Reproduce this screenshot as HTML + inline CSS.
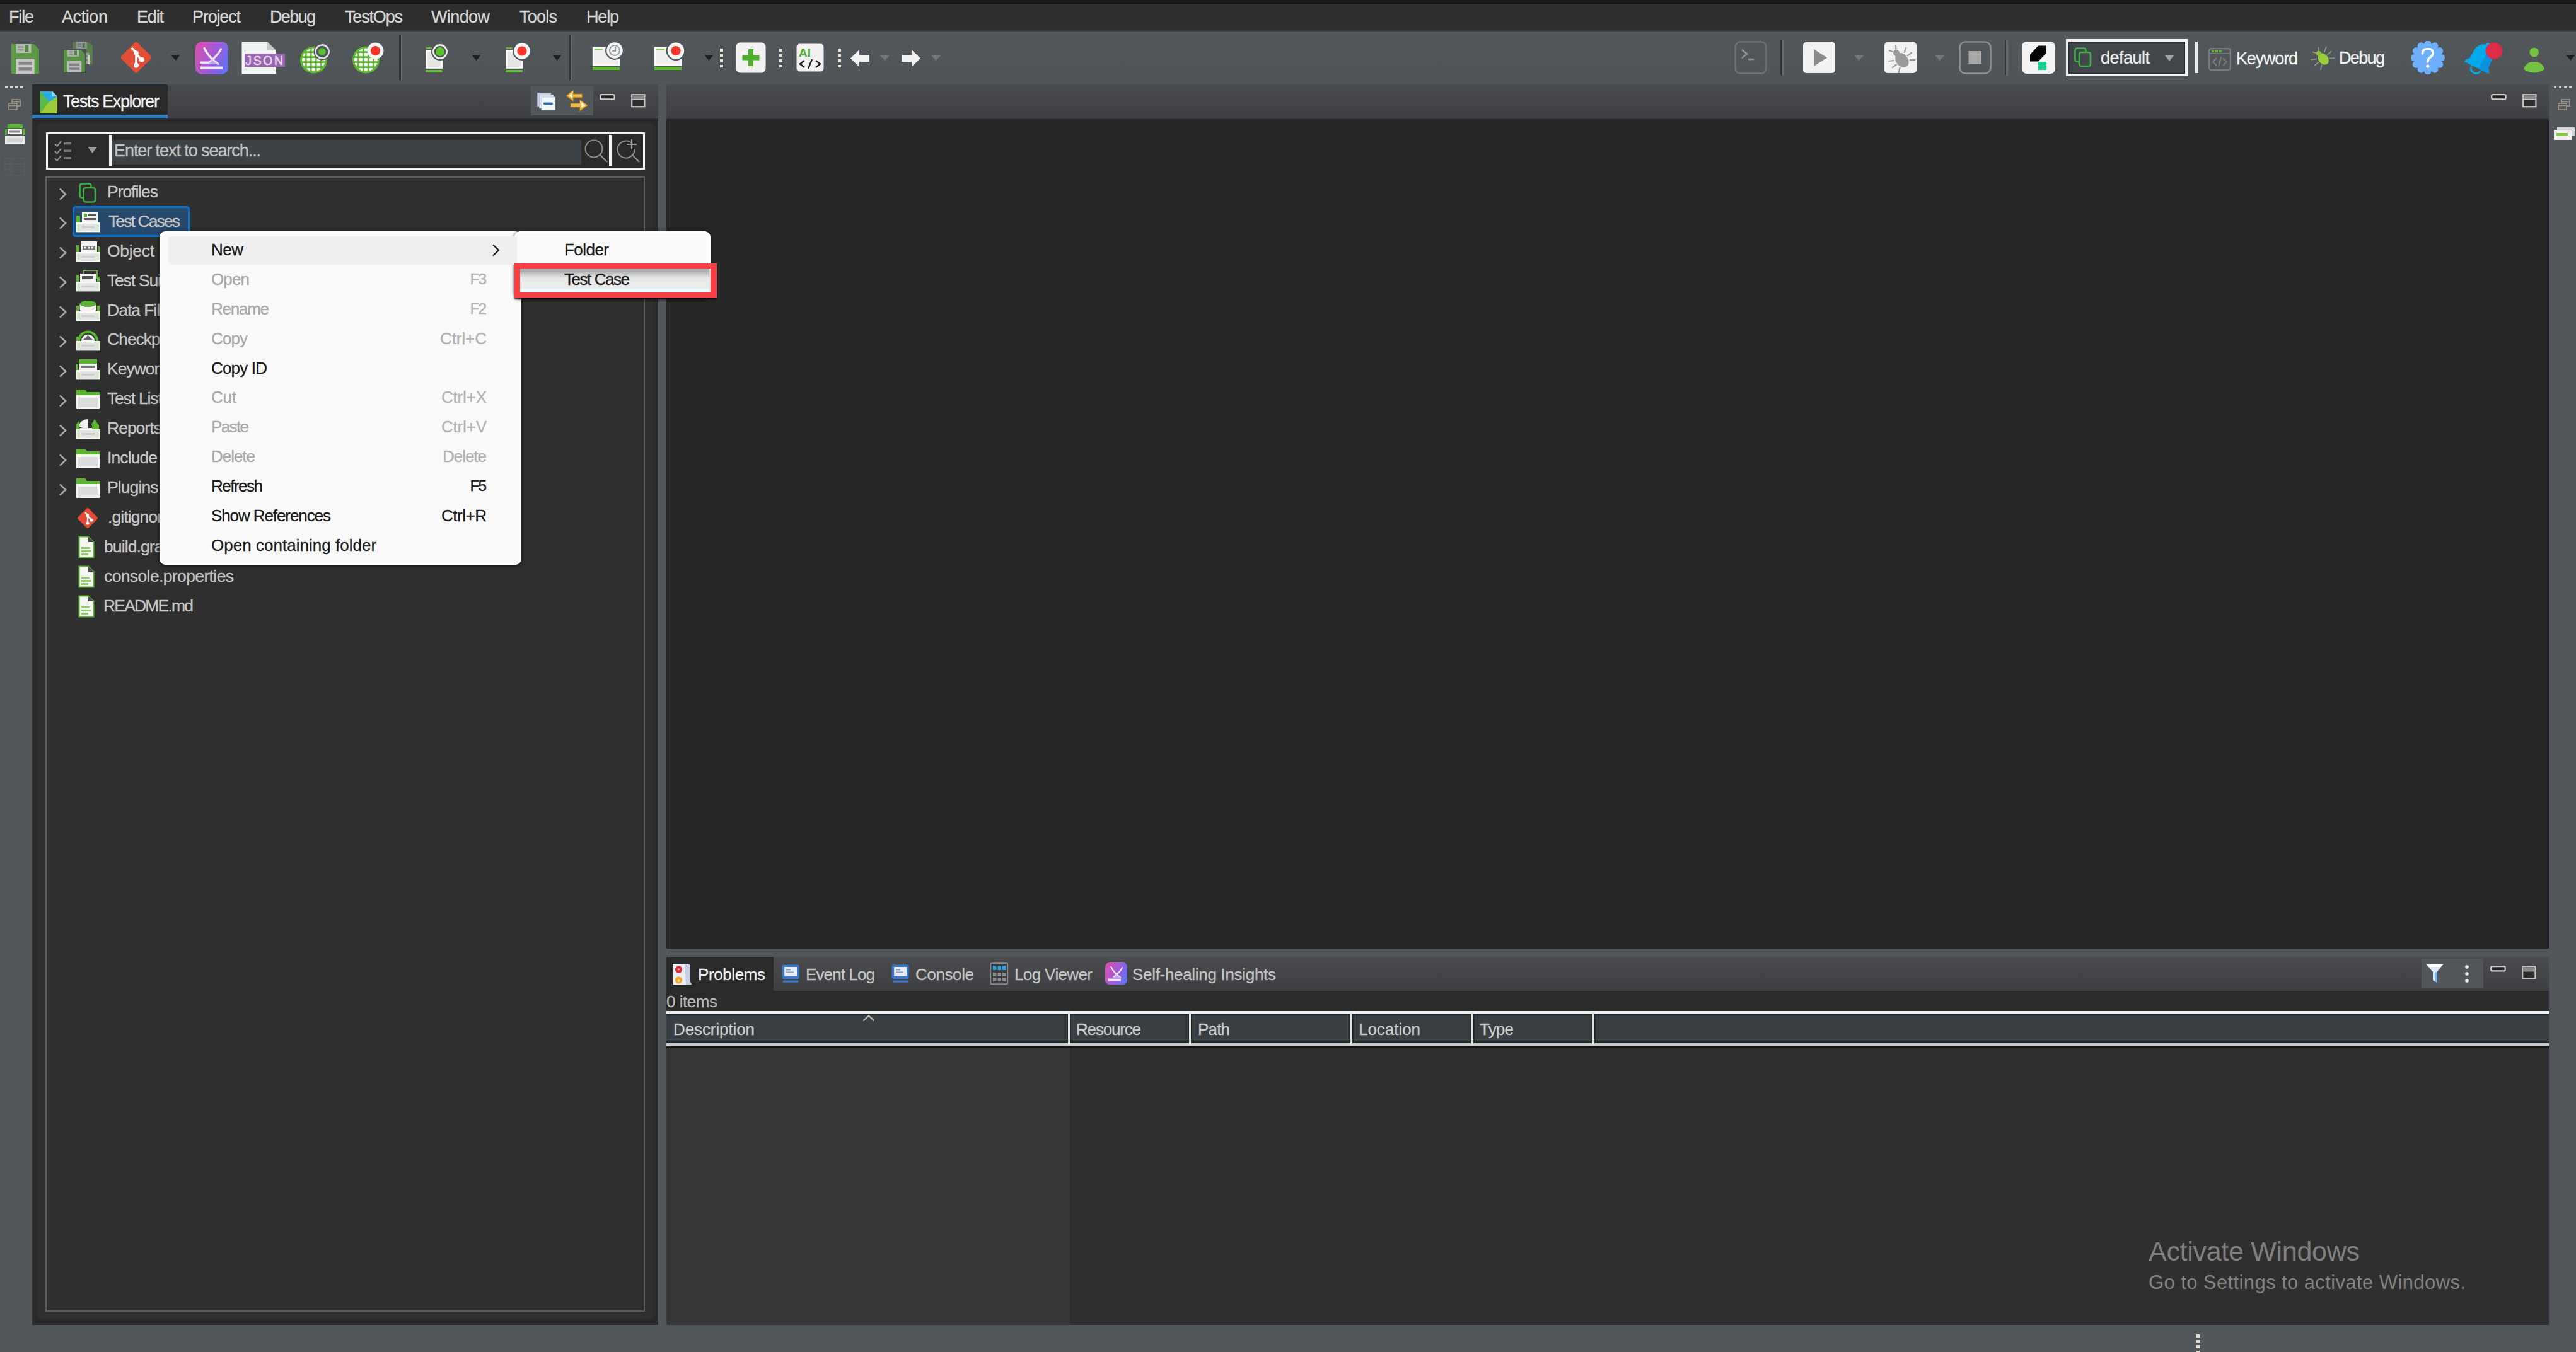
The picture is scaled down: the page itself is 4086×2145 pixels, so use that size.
<!DOCTYPE html>
<html><head><meta charset="utf-8"><title>Katalon Studio</title>
<style>
html,body{margin:0;padding:0;}
body{width:4086px;height:2145px;overflow:hidden;background:#50565a;position:relative;
font-family:"Liberation Sans",sans-serif;}
#root{position:absolute;left:0;top:0;width:4086px;height:2145px;overflow:hidden;}
#root div,#root span,#root svg{position:absolute;box-sizing:border-box;}
.t{white-space:nowrap;font-family:"Liberation Sans",sans-serif;-webkit-text-stroke:0.3px currentColor;}
</style></head><body><div id="root">
<div style="left:0px;top:0px;width:4086px;height:8px;background:#1b1b1b"></div>
<div style="left:0px;top:7px;width:4086px;height:42px;background:#2e2e2e"></div>
<div style="left:0px;top:46.5px;width:4086px;height:3.5px;background:linear-gradient(#2e2e2e,#43484b)"></div>
<span class="t" style="left:14px;top:9.5px;height:35px;line-height:35px;font-size:27px;letter-spacing:-1.17px;color:#d6d6d6;">File</span>
<span class="t" style="left:98px;top:9.5px;height:35px;line-height:35px;font-size:27px;letter-spacing:-0.41px;color:#d6d6d6;">Action</span>
<span class="t" style="left:217px;top:9.5px;height:35px;line-height:35px;font-size:27px;letter-spacing:-1.17px;color:#d6d6d6;">Edit</span>
<span class="t" style="left:305px;top:9.5px;height:35px;line-height:35px;font-size:27px;letter-spacing:-1.17px;color:#d6d6d6;">Project</span>
<span class="t" style="left:428px;top:9.5px;height:35px;line-height:35px;font-size:27px;letter-spacing:-1.64px;color:#d6d6d6;">Debug</span>
<span class="t" style="left:547px;top:9.5px;height:35px;line-height:35px;font-size:27px;letter-spacing:-1.17px;color:#d6d6d6;">TestOps</span>
<span class="t" style="left:684px;top:9.5px;height:35px;line-height:35px;font-size:27px;letter-spacing:-0.61px;color:#d6d6d6;">Window</span>
<span class="t" style="left:824px;top:9.5px;height:35px;line-height:35px;font-size:27px;letter-spacing:-0.76px;color:#d6d6d6;">Tools</span>
<span class="t" style="left:930px;top:9.5px;height:35px;line-height:35px;font-size:27px;letter-spacing:-1.18px;color:#d6d6d6;">Help</span>
<div style="left:0px;top:50px;width:4086px;height:84px;background:linear-gradient(#52585c,#50565a 30%,#4f5558)"></div>
<svg style="left:18px;top:69.5px;opacity:1.0" width="44" height="47" viewBox="0 0 42 45"><path d="M0 0 H34 L42 8 V45 H0 Z" fill="#5b9945"/><rect x="7" y="0" width="23" height="13.5" fill="#b4bdb1"/><rect x="9.5" y="3" width="9" height="2.6" fill="#8e968c"/><rect x="9.5" y="7.4" width="9" height="2.6" fill="#8e968c"/><rect x="21" y="2" width="5" height="9.5" fill="#4f8a3b"/><rect x="7" y="22" width="28" height="23" fill="#c6c6c6"/><rect x="11" y="27" width="20" height="4.4" fill="#868686"/><rect x="11" y="35.4" width="20" height="4.4" fill="#868686"/></svg>
<svg style="left:115px;top:67px;opacity:0.62" width="32" height="34" viewBox="0 0 42 45"><path d="M0 0 H34 L42 8 V45 H0 Z" fill="#5b9945"/><rect x="7" y="0" width="23" height="13.5" fill="#b4bdb1"/><rect x="9.5" y="3" width="9" height="2.6" fill="#8e968c"/><rect x="9.5" y="7.4" width="9" height="2.6" fill="#8e968c"/><rect x="21" y="2" width="5" height="9.5" fill="#4f8a3b"/><rect x="7" y="22" width="28" height="23" fill="#c6c6c6"/><rect x="11" y="27" width="20" height="4.4" fill="#868686"/><rect x="11" y="35.4" width="20" height="4.4" fill="#868686"/></svg>
<div style="left:100px;top:77px;width:36px;height:39px;background:#4a4f52"></div>
<svg style="left:101px;top:78.5px;opacity:0.92" width="34" height="36" viewBox="0 0 42 45"><path d="M0 0 H34 L42 8 V45 H0 Z" fill="#5b9945"/><rect x="7" y="0" width="23" height="13.5" fill="#b4bdb1"/><rect x="9.5" y="3" width="9" height="2.6" fill="#8e968c"/><rect x="9.5" y="7.4" width="9" height="2.6" fill="#8e968c"/><rect x="21" y="2" width="5" height="9.5" fill="#4f8a3b"/><rect x="7" y="22" width="28" height="23" fill="#c6c6c6"/><rect x="11" y="27" width="20" height="4.4" fill="#868686"/><rect x="11" y="35.4" width="20" height="4.4" fill="#868686"/></svg>
<div style="left:139px;top:88px;width:2.6px;height:14px;background:#c9d3c5"></div>
<svg style="left:189.5px;top:65px;" width="52" height="52" viewBox="0 0 50 50"><rect x="7.6" y="7.6" width="34.8" height="34.8" rx="3" transform="rotate(45 25 25)" fill="#e24d35"/><path d="M18 10.5 L25 17.5 V37 M25 20 L33.5 28.5" stroke="#fff" stroke-width="3.4" fill="none"/><circle cx="25" cy="37" r="3.8" fill="#fff"/><circle cx="33.5" cy="28.5" r="3.8" fill="#fff"/><circle cx="25" cy="18.5" r="3.6" fill="#fff"/></svg>
<svg style="left:271px;top:87px;" width="15" height="9" viewBox="0 0 15 9"><path d="M0 0 H15 L7.5 9 Z" fill="#1f1f1f"/></svg>
<svg style="left:310px;top:66px;" width="52" height="52" viewBox="0 0 52 52"><defs><linearGradient id="sh310" x1="0" y1="0.3" x2="1" y2="0.7"><stop offset="0" stop-color="#d650b4"/><stop offset="0.5" stop-color="#a35bd6"/><stop offset="1" stop-color="#6370f4"/></linearGradient></defs><rect x="0" y="0" width="52" height="52" rx="10.5" fill="url(#sh310)"/><path d="M14 10.5 Q20 24 36 35.5" stroke="#f7eefb" stroke-width="3.2" stroke-linecap="round" fill="none"/><path d="M40.5 12 Q34 24 20 34" stroke="#f1e2f8" stroke-width="3.2" stroke-linecap="round" fill="none"/><path d="M26 28 L37 36 L20 36 Z" fill="#cdb8f3" opacity="0.75"/><rect x="7" y="31.5" width="13" height="3.4" fill="#f4e8fb"/><rect x="7" y="39.5" width="36" height="4.2" fill="#f0e2fa"/></svg>
<svg style="left:383px;top:66px;" width="70" height="52" viewBox="0 0 70 52"><path d="M0.5 0.5 H41 L55 14 V51.5 H0.5 Z" fill="#f1f3f2"/><path d="M41 0.5 V14 H55 Z" fill="#c4cac6"/><rect x="5" y="19.5" width="64" height="20.5" fill="#9b67b5"/><text x="37.5" y="37" font-family="Liberation Sans" font-size="19.5" text-anchor="middle" fill="#eadcf2" stroke="#eadcf2" stroke-width="0.5" letter-spacing="2.6">JSON</text></svg>
<svg style="left:476px;top:66px;" width="52" height="52" viewBox="0 0 52 52"><defs><clipPath id="gc476"><circle cx="21.5" cy="29" r="18.5"/></clipPath></defs><circle cx="21.5" cy="29" r="21.5" fill="#5cb82e"/><g clip-path="url(#gc476)"><rect x="2.5" y="10" width="5.6" height="5.2" rx="1" fill="#f6ecf6"/><rect x="10.5" y="10" width="5.6" height="5.2" rx="1" fill="#f6ecf6"/><rect x="18.5" y="10" width="5.6" height="5.2" rx="1" fill="#f6ecf6"/><rect x="26.5" y="10" width="5.6" height="5.2" rx="1" fill="#f6ecf6"/><rect x="34.5" y="10" width="5.6" height="5.2" rx="1" fill="#f6ecf6"/><rect x="2.5" y="18" width="5.6" height="5.2" rx="1" fill="#f6ecf6"/><rect x="10.5" y="18" width="5.6" height="5.2" rx="1" fill="#f6ecf6"/><rect x="18.5" y="18" width="5.6" height="5.2" rx="1" fill="#f6ecf6"/><rect x="26.5" y="18" width="5.6" height="5.2" rx="1" fill="#f6ecf6"/><rect x="34.5" y="18" width="5.6" height="5.2" rx="1" fill="#f6ecf6"/><rect x="2.5" y="26" width="5.6" height="5.2" rx="1" fill="#f6ecf6"/><rect x="10.5" y="26" width="5.6" height="5.2" rx="1" fill="#f6ecf6"/><rect x="18.5" y="26" width="5.6" height="5.2" rx="1" fill="#f6ecf6"/><rect x="26.5" y="26" width="5.6" height="5.2" rx="1" fill="#f6ecf6"/><rect x="34.5" y="26" width="5.6" height="5.2" rx="1" fill="#f6ecf6"/><rect x="2.5" y="34" width="5.6" height="5.2" rx="1" fill="#f6ecf6"/><rect x="10.5" y="34" width="5.6" height="5.2" rx="1" fill="#f6ecf6"/><rect x="18.5" y="34" width="5.6" height="5.2" rx="1" fill="#f6ecf6"/><rect x="26.5" y="34" width="5.6" height="5.2" rx="1" fill="#f6ecf6"/><rect x="34.5" y="34" width="5.6" height="5.2" rx="1" fill="#f6ecf6"/><rect x="2.5" y="42" width="5.6" height="5.2" rx="1" fill="#f6ecf6"/><rect x="10.5" y="42" width="5.6" height="5.2" rx="1" fill="#f6ecf6"/><rect x="18.5" y="42" width="5.6" height="5.2" rx="1" fill="#f6ecf6"/><rect x="26.5" y="42" width="5.6" height="5.2" rx="1" fill="#f6ecf6"/><rect x="34.5" y="42" width="5.6" height="5.2" rx="1" fill="#f6ecf6"/></g><circle cx="35" cy="16" r="13.5" fill="#50565a"/><circle cx="35" cy="16" r="10.6" fill="none" stroke="#dedede" stroke-width="2.6"/><circle cx="35" cy="16" r="5.8" fill="#5cc22e"/></svg>
<svg style="left:558.5px;top:66px;" width="52" height="52" viewBox="0 0 52 52"><defs><clipPath id="gc558"><circle cx="21.5" cy="29" r="18.5"/></clipPath></defs><circle cx="21.5" cy="29" r="21.5" fill="#5cb82e"/><g clip-path="url(#gc558)"><rect x="2.5" y="10" width="5.6" height="5.2" rx="1" fill="#f6ecf6"/><rect x="10.5" y="10" width="5.6" height="5.2" rx="1" fill="#f6ecf6"/><rect x="18.5" y="10" width="5.6" height="5.2" rx="1" fill="#f6ecf6"/><rect x="26.5" y="10" width="5.6" height="5.2" rx="1" fill="#f6ecf6"/><rect x="34.5" y="10" width="5.6" height="5.2" rx="1" fill="#f6ecf6"/><rect x="2.5" y="18" width="5.6" height="5.2" rx="1" fill="#f6ecf6"/><rect x="10.5" y="18" width="5.6" height="5.2" rx="1" fill="#f6ecf6"/><rect x="18.5" y="18" width="5.6" height="5.2" rx="1" fill="#f6ecf6"/><rect x="26.5" y="18" width="5.6" height="5.2" rx="1" fill="#f6ecf6"/><rect x="34.5" y="18" width="5.6" height="5.2" rx="1" fill="#f6ecf6"/><rect x="2.5" y="26" width="5.6" height="5.2" rx="1" fill="#f6ecf6"/><rect x="10.5" y="26" width="5.6" height="5.2" rx="1" fill="#f6ecf6"/><rect x="18.5" y="26" width="5.6" height="5.2" rx="1" fill="#f6ecf6"/><rect x="26.5" y="26" width="5.6" height="5.2" rx="1" fill="#f6ecf6"/><rect x="34.5" y="26" width="5.6" height="5.2" rx="1" fill="#f6ecf6"/><rect x="2.5" y="34" width="5.6" height="5.2" rx="1" fill="#f6ecf6"/><rect x="10.5" y="34" width="5.6" height="5.2" rx="1" fill="#f6ecf6"/><rect x="18.5" y="34" width="5.6" height="5.2" rx="1" fill="#f6ecf6"/><rect x="26.5" y="34" width="5.6" height="5.2" rx="1" fill="#f6ecf6"/><rect x="34.5" y="34" width="5.6" height="5.2" rx="1" fill="#f6ecf6"/><rect x="2.5" y="42" width="5.6" height="5.2" rx="1" fill="#f6ecf6"/><rect x="10.5" y="42" width="5.6" height="5.2" rx="1" fill="#f6ecf6"/><rect x="18.5" y="42" width="5.6" height="5.2" rx="1" fill="#f6ecf6"/><rect x="26.5" y="42" width="5.6" height="5.2" rx="1" fill="#f6ecf6"/><rect x="34.5" y="42" width="5.6" height="5.2" rx="1" fill="#f6ecf6"/></g><circle cx="36.5" cy="14.6" r="13" fill="#f6f6f6"/><circle cx="36.5" cy="14.6" r="7.6" fill="#f5342a"/></svg>
<div style="left:633px;top:56px;width:2.5px;height:71px;background:#30343a"></div>
<div style="left:635.8px;top:56px;width:2.5px;height:71px;background:#676c6f"></div>
<svg style="left:674px;top:66px;" width="44" height="52" viewBox="0 0 44 52"><rect x="1.6" y="9" width="10" height="2.2" fill="#5cb82e"/><rect x="1.4" y="13.4" width="26.6" height="29.4" fill="#fbfbfb"/><rect x="4.2" y="16" width="21" height="24" fill="#e6e6e6"/><rect x="1.2" y="45" width="26.4" height="3.8" fill="#5cc22e"/><circle cx="24" cy="16" r="14" fill="#50565a"/><circle cx="24" cy="16" r="10.6" fill="none" stroke="#efefef" stroke-width="2.6"/><circle cx="24" cy="16" r="6.9" fill="#5cc22e"/></svg>
<svg style="left:748px;top:87px;" width="15" height="9" viewBox="0 0 15 9"><path d="M0 0 H15 L7.5 9 Z" fill="#1f1f1f"/></svg>
<svg style="left:800.5px;top:66px;" width="44" height="52" viewBox="0 0 44 52"><rect x="1.6" y="9" width="10" height="2.2" fill="#5cb82e"/><rect x="1.4" y="13.4" width="26.6" height="29.4" fill="#fbfbfb"/><rect x="4.2" y="16" width="21" height="24" fill="#e6e6e6"/><rect x="1.2" y="45" width="26.4" height="3.8" fill="#5cc22e"/><circle cx="27" cy="15" r="15" fill="#50565a"/><circle cx="27" cy="15" r="12.8" fill="#f6f6f6"/><circle cx="27" cy="15" r="7.6" fill="#f5342a"/></svg>
<svg style="left:876px;top:87px;" width="15" height="9" viewBox="0 0 15 9"><path d="M0 0 H15 L7.5 9 Z" fill="#1f1f1f"/></svg>
<div style="left:903px;top:56px;width:2.5px;height:71px;background:#30343a"></div>
<div style="left:905.8px;top:56px;width:2.5px;height:71px;background:#676c6f"></div>
<svg style="left:939px;top:64px;" width="54" height="50" viewBox="0 0 54 50"><rect x="0.8" y="10.4" width="43.2" height="30" fill="#fbfbfb"/><rect x="3" y="16" width="39" height="21.5" fill="#efefef"/><rect x="3.5" y="13.2" width="13.5" height="2.2" fill="#7fd04e"/><rect x="0.8" y="42" width="43.2" height="5" fill="#5cb82e"/><circle cx="36" cy="16" r="15" fill="#50565a"/><circle cx="36" cy="16" r="12.8" fill="#f4f4f4"/><circle cx="36" cy="16" r="8" fill="none" stroke="#9a9a9a" stroke-width="2"/><path d="M37 10 V17 H32" stroke="#9a9a9a" stroke-width="2.2" fill="none"/></svg>
<svg style="left:1037px;top:64px;" width="54" height="50" viewBox="0 0 54 50"><rect x="0.8" y="10.4" width="43.2" height="30" fill="#fbfbfb"/><rect x="3" y="16" width="39" height="21.5" fill="#efefef"/><rect x="3.5" y="13.2" width="13.5" height="2.2" fill="#7fd04e"/><rect x="0.8" y="42" width="43.2" height="5" fill="#5cb82e"/><circle cx="35" cy="16.6" r="15.4" fill="#50565a"/><circle cx="35" cy="16.6" r="13.2" fill="#f6f6f6"/><circle cx="35" cy="16.6" r="7.6" fill="#f5342a"/></svg>
<svg style="left:1117px;top:87px;" width="15" height="9" viewBox="0 0 15 9"><path d="M0 0 H15 L7.5 9 Z" fill="#1f1f1f"/></svg>
<div style="left:1142px;top:77.0px;width:5px;height:4.6px;background:#e4ddd0"></div>
<div style="left:1142px;top:85.5px;width:5px;height:4.6px;background:#e4ddd0"></div>
<div style="left:1142px;top:94.0px;width:5px;height:4.6px;background:#e4ddd0"></div>
<div style="left:1142px;top:102.5px;width:5px;height:4.6px;background:#e4ddd0"></div>
<svg style="left:1167px;top:67px;" width="48" height="49" viewBox="0 0 48 49"><rect x="1" y="1" width="46" height="47" rx="6" fill="#f1f1f1" stroke="#fff" stroke-width="1"/><path d="M24 11 V38 M10.5 24.5 H37.5" stroke="#4caf2d" stroke-width="8"/></svg>
<div style="left:1236px;top:77.0px;width:5px;height:4.6px;background:#e4ddd0"></div>
<div style="left:1236px;top:85.5px;width:5px;height:4.6px;background:#e4ddd0"></div>
<div style="left:1236px;top:94.0px;width:5px;height:4.6px;background:#e4ddd0"></div>
<div style="left:1236px;top:102.5px;width:5px;height:4.6px;background:#e4ddd0"></div>
<svg style="left:1263px;top:69px;" width="44" height="45" viewBox="0 0 44 45"><rect x="0.5" y="0.5" width="43" height="44" rx="5" fill="#f1f1f1"/><text x="4" y="21" font-family="Liberation Sans" font-weight="bold" font-size="19" fill="#4caf2d">AI</text><path d="M13 27 L6 32.5 L13 38 M31 27 L38 32.5 L31 38 M25 25 L19 40" stroke="#222" stroke-width="2.4" fill="none"/></svg>
<div style="left:1329px;top:77.0px;width:5px;height:4.6px;background:#e4ddd0"></div>
<div style="left:1329px;top:85.5px;width:5px;height:4.6px;background:#e4ddd0"></div>
<div style="left:1329px;top:94.0px;width:5px;height:4.6px;background:#e4ddd0"></div>
<div style="left:1329px;top:102.5px;width:5px;height:4.6px;background:#e4ddd0"></div>
<svg style="left:1349px;top:79px;" width="30" height="27" viewBox="0 0 30 27"><path d="M0 13.5 L14 0 V8 H30 V19 H14 V27 Z" fill="#f2f2f2"/></svg>
<svg style="left:1396px;top:88px;" width="15" height="8" viewBox="0 0 15 8"><path d="M0 0 H15 L7.5 8 Z" fill="#73787b"/></svg>
<svg style="left:1430px;top:79px;" width="30" height="27" viewBox="0 0 30 27"><path d="M30 13.5 L16 0 V8 H0 V19 H16 V27 Z" fill="#f2f2f2"/></svg>
<svg style="left:1477px;top:88px;" width="15" height="8" viewBox="0 0 15 8"><path d="M0 0 H15 L7.5 8 Z" fill="#73787b"/></svg>
<svg style="left:2751px;top:65px;" width="52" height="53" viewBox="0 0 52 53"><rect x="1.5" y="1.5" width="49" height="50" rx="8" fill="none" stroke="#6d7275" stroke-width="2.4"/><path d="M12 14 L20 20.5 L12 27" stroke="#8f9497" stroke-width="2.6" fill="none"/><path d="M22 29 H31" stroke="#8f9497" stroke-width="2.6"/></svg>
<div style="left:2823.5px;top:64px;width:2.5px;height:55px;background:#30343a"></div>
<div style="left:2826.3px;top:64px;width:2.5px;height:55px;background:#676c6f"></div>
<svg style="left:2860px;top:67px;" width="51" height="49" viewBox="0 0 51 49"><rect x="0" y="0" width="51" height="49" rx="5" fill="#f2f2f2"/><path d="M17 11 L38 24.5 L17 38 Z" fill="#8a8a8a"/></svg>
<svg style="left:2941px;top:88px;" width="15" height="8" viewBox="0 0 15 8"><path d="M0 0 H15 L7.5 8 Z" fill="#73787b"/></svg>
<svg style="left:2989px;top:67px;" width="51" height="49" viewBox="0 0 51 49"><rect x="0" y="0" width="51" height="49" rx="5" fill="#f2f2f2"/><g transform="rotate(-38 26 26)"><ellipse cx="26" cy="29" rx="9.5" ry="12.5" fill="#9a9a9a"/><circle cx="26" cy="14.5" r="5" fill="#9a9a9a"/><g stroke="#9a9a9a" stroke-width="2.2" fill="none"><path d="M16 22 L8 17 M15.5 29 H6 M16.5 36 L9 42 M36 22 L44 17 M36.5 29 H46 M35.5 36 L43 42 M23 10 L19 4 M29 10 L33 4"/></g></g></svg>
<svg style="left:3069px;top:88px;" width="15" height="8" viewBox="0 0 15 8"><path d="M0 0 H15 L7.5 8 Z" fill="#73787b"/></svg>
<svg style="left:3107px;top:65px;" width="52" height="53" viewBox="0 0 52 53"><rect x="1.5" y="1.5" width="49" height="50" rx="9" fill="none" stroke="#8a8f92" stroke-width="2.6"/><rect x="15.5" y="16" width="20.5" height="20" fill="#a8a8a8"/></svg>
<div style="left:3179.5px;top:64px;width:2.5px;height:55px;background:#30343a"></div>
<div style="left:3182.3px;top:64px;width:2.5px;height:55px;background:#676c6f"></div>
<svg style="left:3207px;top:66px;" width="53" height="51" viewBox="0 0 53 51"><rect x="0" y="0" width="53" height="51" rx="8" fill="#f4f4f4"/><path d="M26 6.5 H38.5 V18.5 L26 31.5 H13 V20.5 Z" fill="#050505"/><rect x="25.6" y="32" width="13.6" height="13" fill="#1fd192"/></svg>
<div style="left:3277px;top:62px;width:193px;height:59px;border:4px solid #f2f2f2;background:#41464a;box-shadow:inset 0 0 0 1.5px #2a2e31"></div>
<svg style="left:3290px;top:75px;" width="28" height="32" viewBox="0 0 28 32"><rect x="1.5" y="1.5" width="17" height="21" rx="3.5" fill="none" stroke="#3fae49" stroke-width="2.6"/><rect x="8" y="8" width="18" height="22" rx="3.5" fill="#41464a" stroke="#3fae49" stroke-width="2.6"/></svg>
<span class="t" style="left:3332px;top:74.5px;height:35px;line-height:35px;font-size:27px;letter-spacing:-0.51px;color:#f0f0f0;">default</span>
<svg style="left:3434px;top:88px;" width="14" height="9" viewBox="0 0 14 9"><path d="M0 0 H14 L7.0 9 Z" fill="#9ea3a6"/></svg>
<div style="left:3481.5px;top:66px;width:5px;height:50px;background:#ececec"></div>
<svg style="left:3503px;top:76px;" width="36" height="36" viewBox="0 0 36 36"><rect x="1.2" y="1.2" width="33.6" height="33.6" rx="3" fill="none" stroke="#787d80" stroke-width="2.2"/><path d="M1 9 H35" stroke="#787d80" stroke-width="2"/><rect x="5" y="3.5" width="4" height="3.5" fill="#5cb531"/><rect x="11" y="3.5" width="4" height="3.5" fill="#5cb531"/><rect x="17" y="3.5" width="4" height="3.5" fill="#5cb531"/><path d="M13 16 L7 22 L13 28 M23 16 L29 22 L23 28 M20 14 L16 30" stroke="#787d80" stroke-width="2" fill="none"/></svg>
<span class="t" style="left:3547px;top:75.5px;height:35px;line-height:35px;font-size:27px;letter-spacing:-1.17px;color:#f2f2f2;">Keyword</span>
<svg style="left:3665px;top:73px;" width="38" height="38" viewBox="0 0 38 38"><g transform="rotate(-40 19 19)"><g stroke="#8c9686" stroke-width="1.8" fill="none"><path d="M11 14 L3 9 M10.5 20 H1.5 M11.5 26 L4 32 M27 14 L35 9 M27.5 20 H36.5 M26.5 26 L34 32 M16.5 7 L13 1.5 M21.5 7 L25 1.5"/></g><ellipse cx="19" cy="21" rx="7.6" ry="10" fill="#9bcf3a"/><circle cx="19" cy="9.5" r="4" fill="#8fbf3a"/></g></svg>
<span class="t" style="left:3710px;top:74.5px;height:35px;line-height:35px;font-size:27px;letter-spacing:-1.64px;color:#f2f2f2;">Debug</span>
<svg style="left:3824px;top:65px;" width="54" height="53" viewBox="0 0 54 53"><circle cx="27" cy="26.5" r="22.5" fill="#6eb0fb"/><circle cx="27.0" cy="5.0" r="5.6" fill="#6eb0fb"/><circle cx="37.8" cy="7.9" r="5.6" fill="#6eb0fb"/><circle cx="45.6" cy="15.7" r="5.6" fill="#6eb0fb"/><circle cx="48.5" cy="26.5" r="5.6" fill="#6eb0fb"/><circle cx="45.6" cy="37.2" r="5.6" fill="#6eb0fb"/><circle cx="37.8" cy="45.1" r="5.6" fill="#6eb0fb"/><circle cx="27.0" cy="48.0" r="5.6" fill="#6eb0fb"/><circle cx="16.3" cy="45.1" r="5.6" fill="#6eb0fb"/><circle cx="8.4" cy="37.3" r="5.6" fill="#6eb0fb"/><circle cx="5.5" cy="26.5" r="5.6" fill="#6eb0fb"/><circle cx="8.4" cy="15.7" r="5.6" fill="#6eb0fb"/><circle cx="16.2" cy="7.9" r="5.6" fill="#6eb0fb"/><path d="M18.5 20 Q18.5 12.5 27 12.5 Q35 12.5 35 19 Q35 23.5 30 26.5 Q26.8 28.6 26.8 33" fill="none" stroke="#fff" stroke-width="3.6" stroke-linecap="round"/><circle cx="26.8" cy="40" r="2.6" fill="#fff"/></svg>
<svg style="left:3908px;top:64px;" width="66" height="58" viewBox="0 0 66 58"><g transform="rotate(27 27 30)"><path d="M27 1 Q30.5 1 30.5 5.5 Q43 9 43 24 L44 37 Q49 42 49 45 H5 Q5 42 10 37 L11 24 Q11 9 23.5 5.5 Q23.5 1 27 1 Z" fill="#03a9eb"/><path d="M31 8 Q43 11 43 24 L44 37 Q49 42 49 45 H31 Z" fill="#0a93dc"/><path d="M19 47 Q19 54 27 54 Q34 54 35 47" fill="none" stroke="#03a9eb" stroke-width="2.8"/></g><circle cx="48" cy="16.6" r="13.2" fill="#dd2c47"/></svg>
<svg style="left:3994px;top:64px;" width="52" height="56" viewBox="0 0 52 56"><circle cx="25.6" cy="28" r="25" fill="none" stroke="#5b5659" stroke-width="1"/><circle cx="25.6" cy="19" r="7.3" fill="#74c442"/><path d="M9 46 Q12 34 25.6 34 Q39 34 42.2 46 Q34 51.4 25.6 51.4 Q17 51.4 9 46 Z" fill="#74c442"/></svg>
<svg style="left:4070px;top:87px;" width="15" height="9" viewBox="0 0 15 9"><path d="M0 0 H15 L7.5 9 Z" fill="#1f1f1f"/></svg>
<div style="left:0px;top:134px;width:51px;height:1968px;background:#50565a"></div>
<div style="left:8px;top:136px;width:4px;height:4px;background:#d9d2c4"></div>
<div style="left:16px;top:136px;width:4px;height:4px;background:#d9d2c4"></div>
<div style="left:24px;top:136px;width:4px;height:4px;background:#d9d2c4"></div>
<div style="left:32px;top:136px;width:4px;height:4px;background:#d9d2c4"></div>
<svg style="left:13px;top:157px;" width="20" height="19" viewBox="0 0 20 19"><rect x="6" y="1" width="13" height="10" fill="none" stroke="#9a8f84" stroke-width="1.8"/><path d="M6 4.5 H19" stroke="#9a8f84" stroke-width="1.6"/><rect x="1" y="7" width="13" height="10" fill="#50565a" stroke="#9a8f84" stroke-width="1.8"/><path d="M1 10.5 H14" stroke="#9a8f84" stroke-width="1.6"/></svg>
<svg style="left:7px;top:197px;" width="33" height="33" viewBox="0 0 33 33"><rect x="5" y="0" width="24" height="6" fill="#5cb531"/><rect x="1" y="7" width="3" height="10" fill="#5cb531"/><rect x="29" y="7" width="3" height="10" fill="#5cb531"/><rect x="5" y="8" width="23" height="8" fill="#f4f4f4"/><rect x="8" y="10.5" width="17" height="3" fill="#888"/><rect x="1" y="19" width="31" height="13" fill="#e9e9e9"/><rect x="4" y="22" width="25" height="7" fill="#d2d2d2"/></svg>
<svg style="left:7px;top:250px;" width="33" height="30" viewBox="0 0 33 30"><g fill="none" stroke="#585d60" stroke-width="1.5"><rect x="1" y="1" width="31" height="27"/><path d="M1 10 H32 M1 19 H32 M11 1 V28"/></g></svg>
<div style="left:51px;top:134px;width:993px;height:1968px;background:#2a2a2a"></div>
<div style="left:51px;top:134px;width:993px;height:54px;background:linear-gradient(#494b4e,#3d3f42)"></div>
<div style="left:51px;top:188px;width:993px;height:6px;background:linear-gradient(#303234,#242424 50%,#2a2a2a)"></div>
<div style="left:60px;top:196px;width:975px;height:1896px;background:#2f2f2f"></div>
<div style="left:51px;top:134px;width:215px;height:53px;background:#2a2a2a"></div>
<div style="left:51px;top:181.5px;width:215px;height:6.5px;background:#2f7bbd"></div>
<svg style="left:63.5px;top:144.5px;" width="27" height="35" viewBox="0 0 27 35"><path d="M0 0 H19 L27 8 V35 H0 Z" fill="#9ccc3c"/><path d="M0 0 H19 L27 8 L13.5 17 Z" fill="#29abe2"/><path d="M0 0 L13.5 17 L0 35 Z" fill="#59b947"/><path d="M19 0 L27 8 H19 Z" fill="#8fd3ee"/></svg>
<span class="t" style="left:100px;top:143.9px;height:35px;line-height:35px;font-size:27px;letter-spacing:-1.39px;color:#f0f0f0;">Tests Explorer</span>
<div style="left:842px;top:136px;width:98.5px;height:47px;background:#50565a"></div>
<svg style="left:852px;top:146px;" width="30" height="30" viewBox="0 0 30 30"><rect x="0.8" y="1.6" width="21" height="21" fill="#c5d3e4" stroke="#a9b9cd" stroke-width="1.2"/><rect x="3.6" y="4.6" width="22" height="21" fill="#dfe9f3" stroke="#b3c2d4" stroke-width="1.2"/><rect x="7" y="8" width="21.5" height="20.5" fill="#f4fafc" stroke="#c2d0de" stroke-width="1.2"/><rect x="10" y="16.6" width="15" height="3.6" rx="1.6" fill="#2d6eb3"/></svg>
<svg style="left:897px;top:142px;" width="37" height="36" viewBox="0 0 37 36"><defs><linearGradient id="la1" x1="0" y1="0" x2="0" y2="1"><stop offset="0" stop-color="#f7d77f"/><stop offset="1" stop-color="#e9a019"/></linearGradient></defs><path d="M12.5 0.8 L0.8 10 L12.5 19 V13 H26.5 V7 H12.5 Z" fill="url(#la1)" stroke="#a26f12" stroke-width="1.1"/><path d="M22.5 16 L35.2 25 L22.5 34.6 V28 H8 V22 H22.5 Z" fill="url(#la1)" stroke="#a26f12" stroke-width="1.1"/><path d="M5 10 L11 6 V13.5 Z" fill="#fff6d8"/><path d="M31 25 L25 21 V29 Z" fill="#fff6d8"/></svg>
<svg style="left:951px;top:149px;" width="25" height="11" viewBox="0 0 25 11"><rect x="1.2" y="1.2" width="22.4" height="7.2" rx="2" fill="#1f2123" stroke="#cdcdcd" stroke-width="2.2"/></svg>
<svg style="left:1001px;top:149px;" width="23" height="22" viewBox="0 0 23 22"><rect x="1.2" y="1.2" width="20.2" height="19" fill="#2c2e30" stroke="#c6c6c6" stroke-width="2.2"/><rect x="2.4" y="2.4" width="17.8" height="5" fill="#8a8a8a"/><path d="M1 8.4 H22" stroke="#c6c6c6" stroke-width="1.8"/></svg>
<div style="left:72.5px;top:209.5px;width:950.5px;height:59.5px;background:#2a2a2a;border:3.6px solid #f4f4f4"></div>
<div style="left:173px;top:214px;width:5px;height:50px;background:#f0f0f0"></div>
<div style="left:178px;top:221.5px;width:744px;height:39.5px;background:#3c4245"></div>
<div style="left:966px;top:214px;width:5px;height:50px;background:#f4f4f4"></div>
<svg style="left:86px;top:223px;" width="29" height="36" viewBox="0 0 29 36"><path d="M1 5.0 L4.5 9.0 L11 1.0" fill="none" stroke="#8c8c8c" stroke-width="2"/><rect x="15" y="3.0" width="12" height="3.4" fill="#777"/><path d="M1 16.5 L4.5 20.5 L11 12.5" fill="none" stroke="#8c8c8c" stroke-width="2"/><rect x="15" y="14.5" width="12" height="3.4" fill="#777"/><path d="M1 28.0 L4.5 32.0 L11 24.0" fill="none" stroke="#8c8c8c" stroke-width="2"/><rect x="15" y="26.0" width="12" height="3.4" fill="#777"/></svg>
<svg style="left:139px;top:233px;" width="15" height="10" viewBox="0 0 15 10"><path d="M0 0 H15 L7.5 10 Z" fill="#9a9a9a"/></svg>
<span class="t" style="left:181px;top:221.5px;height:35px;line-height:35px;font-size:27px;letter-spacing:-1.07px;color:#c2c2c2;">Enter text to search...</span>
<svg style="left:925px;top:219px;" width="40" height="40" viewBox="0 0 40 40"><circle cx="17" cy="17" r="13.5" fill="none" stroke="#8e8e8e" stroke-width="2"/><path d="M26.5 26.5 L38 38" stroke="#8e8e8e" stroke-width="2.4"/></svg>
<svg style="left:976px;top:219px;" width="40" height="40" viewBox="0 0 40 40"><path d="M27 9 A13.5 13.5 0 1 0 30.5 17" fill="none" stroke="#8e8e8e" stroke-width="2"/><path d="M26.5 26.5 L38 38" stroke="#8e8e8e" stroke-width="2.4"/><path d="M26 2 V18 M18 10 H34" stroke="#9a9a9a" stroke-width="2.2"/></svg>
<div style="left:72px;top:280px;width:951px;height:1801px;border:2px solid #5c5c5c;background:#2f2f2f"></div>
<svg style="left:92.5px;top:297.5px;" width="14" height="20" viewBox="0 0 14 20"><path d="M2 1.5 L11 10 L2 18.5" fill="none" stroke="#a8a8a8" stroke-width="2.6"/></svg>
<svg style="left:125px;top:290.0px;" width="28" height="32" viewBox="0 0 28 32"><rect x="1.5" y="1.5" width="18" height="22" rx="3.5" fill="none" stroke="#3fae49" stroke-width="2.6"/><rect x="7.5" y="8" width="18.5" height="22.5" rx="3.5" fill="#2f2f2f" stroke="#3fae49" stroke-width="2.6"/></svg>
<span class="t" style="left:170px;top:286.9px;height:34px;line-height:34px;font-size:26.5px;letter-spacing:-1.05px;color:#c6c6c6;">Profiles</span>
<div style="left:114.5px;top:327px;width:186.8px;height:48.8px;background:#26496c;border:3px solid #0c71ca;border-radius:4.5px"></div>
<svg style="left:92.5px;top:344.4px;" width="14" height="20" viewBox="0 0 14 20"><path d="M2 1.5 L11 10 L2 18.5" fill="none" stroke="#a8a8a8" stroke-width="2.6"/></svg>
<svg style="left:120px;top:334.9px;" width="39" height="34" viewBox="0 0 39 34"><rect x="10" y="1" width="25" height="17" fill="#f2f2f2"/><rect x="1" y="7" width="6" height="11" fill="#5cb531"/><rect x="13" y="4" width="5" height="5" fill="#5cb531"/><rect x="20" y="5" width="12" height="3" fill="#555"/><rect x="13" y="11" width="19" height="3" fill="#555"/><rect x="0.6" y="18" width="38" height="15.4" fill="#fafafa"/><rect x="2.2" y="20.4" width="34.8" height="11.2" fill="#d3eac3"/><rect x="6.6" y="20.4" width="26" height="11.2" fill="#e4e4e4"/><rect x="9" y="24" width="21" height="3" fill="#cfcfcf"/></svg>
<span class="t" style="left:172px;top:333.8px;height:34px;line-height:34px;font-size:26.5px;letter-spacing:-1.90px;color:#c6c6c6;">Test Cases</span>
<svg style="left:92.5px;top:391.3px;" width="14" height="20" viewBox="0 0 14 20"><path d="M2 1.5 L11 10 L2 18.5" fill="none" stroke="#a8a8a8" stroke-width="2.6"/></svg>
<svg style="left:120px;top:381.8px;" width="39" height="34" viewBox="0 0 39 34"><rect x="8" y="1" width="26" height="17" fill="#f2f2f2"/><rect x="1" y="7" width="4" height="11" fill="#5cb531"/><rect x="35" y="9" width="3" height="9" fill="#5cb531"/><rect x="11" y="8" width="20" height="6" fill="#777"/><rect x="13" y="9.5" width="3" height="3" fill="#eee"/><rect x="19" y="9.5" width="3" height="3" fill="#eee"/><rect x="25" y="9.5" width="3" height="3" fill="#eee"/><rect x="0.6" y="18" width="38" height="15.4" fill="#fafafa"/><rect x="2.2" y="20.4" width="34.8" height="11.2" fill="#d3eac3"/><rect x="6.6" y="20.4" width="26" height="11.2" fill="#e4e4e4"/><rect x="9" y="24" width="21" height="3" fill="#cfcfcf"/></svg>
<span class="t" style="left:170px;top:380.7px;height:34px;line-height:34px;font-size:26.5px;letter-spacing:-0.32px;color:#c6c6c6;">Object Repository</span>
<svg style="left:92.5px;top:438.2px;" width="14" height="20" viewBox="0 0 14 20"><path d="M2 1.5 L11 10 L2 18.5" fill="none" stroke="#a8a8a8" stroke-width="2.6"/></svg>
<svg style="left:120px;top:428.7px;" width="39" height="34" viewBox="0 0 39 34"><rect x="12" y="0" width="22" height="12" fill="none" stroke="#5cb531" stroke-width="2"/><rect x="7" y="5" width="25" height="13" fill="#f2f2f2"/><rect x="1" y="7" width="4" height="11" fill="#5cb531"/><rect x="34" y="10" width="4" height="8" fill="#5cb531"/><rect x="10" y="9" width="18" height="5" fill="#555"/><rect x="0.6" y="18" width="38" height="15.4" fill="#fafafa"/><rect x="2.2" y="20.4" width="34.8" height="11.2" fill="#d3eac3"/><rect x="6.6" y="20.4" width="26" height="11.2" fill="#e4e4e4"/><rect x="9" y="24" width="21" height="3" fill="#cfcfcf"/></svg>
<span class="t" style="left:170px;top:427.6px;height:34px;line-height:34px;font-size:26.5px;letter-spacing:-1.20px;color:#c6c6c6;">Test Suites</span>
<svg style="left:92.5px;top:485.1px;" width="14" height="20" viewBox="0 0 14 20"><path d="M2 1.5 L11 10 L2 18.5" fill="none" stroke="#a8a8a8" stroke-width="2.6"/></svg>
<svg style="left:120px;top:475.6px;" width="39" height="34" viewBox="0 0 39 34"><ellipse cx="19.5" cy="6" rx="13" ry="5" fill="#5cb531"/><path d="M6.5 6 V15 A13 5 0 0 0 32.5 15 V6 A13 5 0 0 1 6.5 6 Z" fill="#f2f2f2"/><rect x="1" y="9" width="4" height="9" fill="#5cb531"/><rect x="34" y="9" width="4" height="9" fill="#5cb531"/><rect x="0.6" y="18" width="38" height="15.4" fill="#fafafa"/><rect x="2.2" y="20.4" width="34.8" height="11.2" fill="#d3eac3"/><rect x="6.6" y="20.4" width="26" height="11.2" fill="#e4e4e4"/><rect x="9" y="24" width="21" height="3" fill="#cfcfcf"/></svg>
<span class="t" style="left:170px;top:474.5px;height:34px;line-height:34px;font-size:26.5px;letter-spacing:-1.00px;color:#c6c6c6;">Data Files</span>
<svg style="left:92.5px;top:532.0px;" width="14" height="20" viewBox="0 0 14 20"><path d="M2 1.5 L11 10 L2 18.5" fill="none" stroke="#a8a8a8" stroke-width="2.6"/></svg>
<svg style="left:120px;top:522.5px;" width="39" height="34" viewBox="0 0 39 34"><path d="M5 18 A14.5 14.5 0 0 1 34 18" fill="none" stroke="#5cb531" stroke-width="4"/><path d="M9 18 A10.5 10.5 0 0 1 30 18 Z" fill="#f2f2f2"/><path d="M12 16 L19.5 9 L27 16 Z" fill="#666"/><rect x="1" y="11" width="3" height="7" fill="#5cb531"/><rect x="0.6" y="18" width="38" height="15.4" fill="#fafafa"/><rect x="2.2" y="20.4" width="34.8" height="11.2" fill="#d3eac3"/><rect x="6.6" y="20.4" width="26" height="11.2" fill="#e4e4e4"/><rect x="9" y="24" width="21" height="3" fill="#cfcfcf"/></svg>
<span class="t" style="left:170px;top:521.4px;height:34px;line-height:34px;font-size:26.5px;letter-spacing:-1.00px;color:#c6c6c6;">Checkpoints</span>
<svg style="left:92.5px;top:578.9px;" width="14" height="20" viewBox="0 0 14 20"><path d="M2 1.5 L11 10 L2 18.5" fill="none" stroke="#a8a8a8" stroke-width="2.6"/></svg>
<svg style="left:120px;top:569.4px;" width="39" height="34" viewBox="0 0 39 34"><rect x="5" y="1" width="29" height="7" fill="#5cb531"/><rect x="5" y="8" width="29" height="10" fill="#f2f2f2"/><rect x="8" y="11" width="23" height="4" fill="#777"/><rect x="1" y="9" width="3" height="9" fill="#5cb531"/><rect x="0.6" y="18" width="38" height="15.4" fill="#fafafa"/><rect x="2.2" y="20.4" width="34.8" height="11.2" fill="#d3eac3"/><rect x="6.6" y="20.4" width="26" height="11.2" fill="#e4e4e4"/><rect x="9" y="24" width="21" height="3" fill="#cfcfcf"/></svg>
<span class="t" style="left:170px;top:568.3px;height:34px;line-height:34px;font-size:26.5px;letter-spacing:-1.00px;color:#c6c6c6;">Keywords</span>
<svg style="left:92.5px;top:625.8px;" width="14" height="20" viewBox="0 0 14 20"><path d="M2 1.5 L11 10 L2 18.5" fill="none" stroke="#a8a8a8" stroke-width="2.6"/></svg>
<svg style="left:120px;top:616.3px;" width="39" height="34" viewBox="0 0 39 34"><path d="M1 2 H15 L18 6 H38 V12 H1 Z" fill="#5cb531"/><rect x="1" y="11" width="37" height="22" fill="#f4f4f4"/><rect x="4" y="15" width="31" height="15" fill="#dcdcdc"/></svg>
<span class="t" style="left:170px;top:615.2px;height:34px;line-height:34px;font-size:26.5px;letter-spacing:-1.20px;color:#c6c6c6;">Test Listeners</span>
<svg style="left:92.5px;top:672.7px;" width="14" height="20" viewBox="0 0 14 20"><path d="M2 1.5 L11 10 L2 18.5" fill="none" stroke="#a8a8a8" stroke-width="2.6"/></svg>
<svg style="left:120px;top:663.2px;" width="39" height="34" viewBox="0 0 39 34"><path d="M19.5 18 L19.5 2 A16 16 0 0 0 4 14 Z" fill="#f0f0f0"/><path d="M6 16 A14 14 0 0 0 33 16 Z" fill="#dddddd"/><path d="M24 12 L30 2 L37 12 Z" fill="#5cb531"/><path d="M1 10 L6 4 V18 H1 Z" fill="#5cb531"/><rect x="26" y="11" width="11" height="7" fill="#5cb531"/><rect x="0.6" y="18" width="38" height="15.4" fill="#fafafa"/><rect x="2.2" y="20.4" width="34.8" height="11.2" fill="#d3eac3"/><rect x="6.6" y="20.4" width="26" height="11.2" fill="#e4e4e4"/><rect x="9" y="24" width="21" height="3" fill="#cfcfcf"/></svg>
<span class="t" style="left:170px;top:662.1px;height:34px;line-height:34px;font-size:26.5px;letter-spacing:-1.00px;color:#c6c6c6;">Reports</span>
<svg style="left:92.5px;top:719.5999999999999px;" width="14" height="20" viewBox="0 0 14 20"><path d="M2 1.5 L11 10 L2 18.5" fill="none" stroke="#a8a8a8" stroke-width="2.6"/></svg>
<svg style="left:120px;top:710.0999999999999px;" width="39" height="34" viewBox="0 0 39 34"><path d="M1 2 H15 L18 6 H38 V12 H1 Z" fill="#5cb531"/><rect x="1" y="11" width="37" height="22" fill="#f4f4f4"/><rect x="4" y="15" width="31" height="15" fill="#dcdcdc"/></svg>
<span class="t" style="left:170px;top:709.0px;height:34px;line-height:34px;font-size:26.5px;letter-spacing:-0.90px;color:#c6c6c6;">Include</span>
<svg style="left:92.5px;top:766.5px;" width="14" height="20" viewBox="0 0 14 20"><path d="M2 1.5 L11 10 L2 18.5" fill="none" stroke="#a8a8a8" stroke-width="2.6"/></svg>
<svg style="left:120px;top:757.0px;" width="39" height="34" viewBox="0 0 39 34"><path d="M1 2 H15 L18 6 H38 V12 H1 Z" fill="#5cb531"/><rect x="1" y="11" width="37" height="22" fill="#f4f4f4"/><rect x="4" y="15" width="31" height="15" fill="#dcdcdc"/></svg>
<span class="t" style="left:170px;top:755.9px;height:34px;line-height:34px;font-size:26.5px;letter-spacing:-0.90px;color:#c6c6c6;">Plugins</span>
<svg style="left:122px;top:804.9px;" width="34" height="34" viewBox="0 0 34 34"><rect x="5" y="5" width="24" height="24" rx="2.5" transform="rotate(45 17 17)" fill="#e24a33"/><path d="M13 8 L17 12 V25 M17 14 L23 20" stroke="#fff" stroke-width="2.4" fill="none"/><circle cx="17" cy="25" r="2.6" fill="#fff"/><circle cx="23" cy="20" r="2.6" fill="#fff"/><circle cx="17" cy="13" r="2.4" fill="#fff"/></svg>
<span class="t" style="left:171px;top:802.8px;height:34px;line-height:34px;font-size:26.5px;letter-spacing:-0.90px;color:#c6c6c6;">.gitignore</span>
<svg style="left:124px;top:849.8px;" width="26" height="36" viewBox="0 0 26 36"><path d="M1.5 1.5 H16 L24.5 10 V34.5 H1.5 Z" fill="#f6f6f6" stroke="#5cb531" stroke-width="2"/><path d="M16 1.5 V10 H24.5 Z" fill="#4a4a4a"/><rect x="5" y="18" width="13" height="3" fill="#8fce6a"/><rect x="5" y="23" width="15" height="3" fill="#8fce6a"/><rect x="5" y="28" width="11" height="3" fill="#8fce6a"/></svg>
<span class="t" style="left:165px;top:849.7px;height:34px;line-height:34px;font-size:26.5px;letter-spacing:-0.90px;color:#c6c6c6;">build.gradle</span>
<svg style="left:124px;top:896.6999999999999px;" width="26" height="36" viewBox="0 0 26 36"><path d="M1.5 1.5 H16 L24.5 10 V34.5 H1.5 Z" fill="#f6f6f6" stroke="#5cb531" stroke-width="2"/><path d="M16 1.5 V10 H24.5 Z" fill="#4a4a4a"/><rect x="5" y="18" width="13" height="3" fill="#8fce6a"/><rect x="5" y="23" width="15" height="3" fill="#8fce6a"/><rect x="5" y="28" width="11" height="3" fill="#8fce6a"/></svg>
<span class="t" style="left:165px;top:896.6px;height:34px;line-height:34px;font-size:26.5px;letter-spacing:-0.62px;color:#c6c6c6;">console.properties</span>
<svg style="left:124px;top:943.6px;" width="26" height="36" viewBox="0 0 26 36"><path d="M1.5 1.5 H16 L24.5 10 V34.5 H1.5 Z" fill="#f6f6f6" stroke="#5cb531" stroke-width="2"/><path d="M16 1.5 V10 H24.5 Z" fill="#4a4a4a"/><rect x="5" y="18" width="13" height="3" fill="#8fce6a"/><rect x="5" y="23" width="15" height="3" fill="#8fce6a"/><rect x="5" y="28" width="11" height="3" fill="#8fce6a"/></svg>
<span class="t" style="left:164px;top:943.5px;height:34px;line-height:34px;font-size:26.5px;letter-spacing:-1.82px;color:#c6c6c6;">README.md</span>
<div style="left:1057px;top:134px;width:2986px;height:1371px;background:#272727"></div>
<div style="left:1057px;top:134px;width:2986px;height:54.5px;background:linear-gradient(#4a4b4f,#3e3f43)"></div>
<svg style="left:3951px;top:149px;" width="25" height="11" viewBox="0 0 25 11"><rect x="1.2" y="1.2" width="22.4" height="7.2" rx="2" fill="#1f2123" stroke="#cdcdcd" stroke-width="2.2"/></svg>
<svg style="left:4001px;top:149px;" width="23" height="22" viewBox="0 0 23 22"><rect x="1.2" y="1.2" width="20.2" height="19" fill="#2c2e30" stroke="#c6c6c6" stroke-width="2.2"/><rect x="2.4" y="2.4" width="17.8" height="5" fill="#8a8a8a"/><path d="M1 8.4 H22" stroke="#c6c6c6" stroke-width="1.8"/></svg>
<div style="left:1057px;top:1518px;width:2986px;height:584px;background:#2f2f2f"></div>
<div style="left:1057px;top:1518px;width:2986px;height:54px;background:linear-gradient(#494b4e,#3d3f42)"></div>
<div style="left:1057px;top:1518px;width:170px;height:54px;background:#2a2a2a"></div>
<div style="left:1057px;top:1572px;width:2986px;height:32px;background:#2a2a2a"></div>
<svg style="left:1066px;top:1528px;" width="32" height="36" viewBox="0 0 32 36"><path d="M1 1 H24 L29 3 V30 L31 34 H1 Z" fill="#e9edf4"/><path d="M20 2 L29 3 V30 L31 34 H22 Z" fill="#c4cfe2"/><circle cx="10.5" cy="10" r="5.6" fill="#e8262b"/><circle cx="10.5" cy="10" r="1.8" fill="#f7b0b0"/><circle cx="10.5" cy="27" r="5.6" fill="#f5a623"/><circle cx="10.5" cy="28" r="1.8" fill="#fde6b0"/></svg>
<span class="t" style="left:1107px;top:1529.0px;height:34px;line-height:34px;font-size:26px;letter-spacing:-0.40px;color:#f0f0f0;">Problems</span>
<svg style="left:1240px;top:1530px;" width="29" height="30" viewBox="0 0 29 30"><rect x="0.6" y="0.6" width="27" height="22.6" rx="3" fill="#3b78d0"/><rect x="4.2" y="4" width="19.8" height="14.6" fill="#e9edf7"/><path d="M7 8.4 H14 M7 12.6 H19" stroke="#8f9cc0" stroke-width="2.4"/><rect x="2" y="25.6" width="24.4" height="3" fill="#3b78d0"/></svg>
<span class="t" style="left:1278px;top:1529.0px;height:34px;line-height:34px;font-size:26px;letter-spacing:-0.89px;color:#c4c4c4;">Event Log</span>
<svg style="left:1414px;top:1530px;" width="29" height="30" viewBox="0 0 29 30"><rect x="0.6" y="0.6" width="27" height="22.6" rx="3" fill="#3b78d0"/><rect x="4.2" y="4" width="19.8" height="14.6" fill="#e9edf7"/><path d="M7 8.4 H14 M7 12.6 H19" stroke="#8f9cc0" stroke-width="2.4"/><rect x="2" y="25.6" width="24.4" height="3" fill="#3b78d0"/></svg>
<span class="t" style="left:1452px;top:1529.0px;height:34px;line-height:34px;font-size:26px;letter-spacing:-0.40px;color:#c4c4c4;">Console</span>
<svg style="left:1570px;top:1527px;" width="30" height="36" viewBox="0 0 30 36"><rect x="1.2" y="1.2" width="27" height="33" rx="2" fill="#3a3d40" stroke="#8a8a8a" stroke-width="2"/><rect x="5.0" y="5" width="5.5" height="7" fill="#2fa0e0"/><rect x="12.5" y="5" width="5.5" height="7" fill="#2fa0e0"/><rect x="20.0" y="5" width="5.5" height="7" fill="#2fa0e0"/><rect x="5.0" y="16" width="5.5" height="6" fill="#8a8a8a"/><rect x="12.5" y="16" width="5.5" height="6" fill="#8a8a8a"/><rect x="20.0" y="16" width="5.5" height="6" fill="#8a8a8a"/><rect x="5.0" y="24" width="5.5" height="6" fill="#8a8a8a"/><rect x="12.5" y="24" width="5.5" height="6" fill="#8a8a8a"/><rect x="20.0" y="24" width="5.5" height="6" fill="#8a8a8a"/></svg>
<span class="t" style="left:1609px;top:1529.0px;height:34px;line-height:34px;font-size:26px;letter-spacing:-0.62px;color:#c4c4c4;">Log Viewer</span>
<svg style="left:1753px;top:1527px;" width="35" height="35" viewBox="0 0 52 52"><defs><linearGradient id="sh1753" x1="0" y1="0.3" x2="1" y2="0.7"><stop offset="0" stop-color="#d650b4"/><stop offset="0.5" stop-color="#a35bd6"/><stop offset="1" stop-color="#6370f4"/></linearGradient></defs><rect x="0" y="0" width="52" height="52" rx="10.5" fill="url(#sh1753)"/><path d="M14 10.5 Q20 24 36 35.5" stroke="#f7eefb" stroke-width="3.2" stroke-linecap="round" fill="none"/><path d="M40.5 12 Q34 24 20 34" stroke="#f1e2f8" stroke-width="3.2" stroke-linecap="round" fill="none"/><path d="M26 28 L37 36 L20 36 Z" fill="#cdb8f3" opacity="0.75"/><rect x="7" y="38" width="30" height="6" fill="#f0e2fa"/></svg>
<span class="t" style="left:1796px;top:1529.0px;height:34px;line-height:34px;font-size:26px;letter-spacing:-0.31px;color:#c4c4c4;">Self-healing Insights</span>
<div style="left:3841px;top:1521px;width:98px;height:47px;background:#50565a"></div>
<svg style="left:3847px;top:1528px;" width="30" height="33" viewBox="0 0 30 33"><path d="M1 1 H29 L18.5 14 V31 L12 27 V14 Z" fill="#dcecff"/><path d="M1 1 H29 L25 6 H5 Z" fill="#ffffff"/><path d="M15 14 H18.5 V31 L15 29 Z" fill="#7db6f2"/></svg>
<svg style="left:3908px;top:1530px;" width="10" height="30" viewBox="0 0 10 30"><circle cx="5" cy="4" r="2.8" fill="#f0f0f0"/><circle cx="5" cy="15" r="2.8" fill="#f0f0f0"/><circle cx="5" cy="26" r="2.8" fill="#f0f0f0"/></svg>
<svg style="left:3950px;top:1532px;" width="25" height="11" viewBox="0 0 25 11"><rect x="1.2" y="1.2" width="22.4" height="7.2" rx="2" fill="#1f2123" stroke="#cdcdcd" stroke-width="2.2"/></svg>
<svg style="left:4000px;top:1532px;" width="23" height="22" viewBox="0 0 23 22"><rect x="1.2" y="1.2" width="20.2" height="19" fill="#2c2e30" stroke="#c6c6c6" stroke-width="2.2"/><rect x="2.4" y="2.4" width="17.8" height="5" fill="#8a8a8a"/><path d="M1 8.4 H22" stroke="#c6c6c6" stroke-width="1.8"/></svg>
<span class="t" style="left:1057px;top:1572.0px;height:34px;line-height:34px;font-size:26px;letter-spacing:-0.47px;color:#b6b6b6;">0 items</span>
<div style="left:1057px;top:1603.5px;width:2986px;height:57px;background:#383e41"></div>
<div style="left:1057px;top:1603.5px;width:2986px;height:4.6px;background:#f1f1f1"></div>
<div style="left:1057px;top:1608px;width:2986px;height:2.5px;background:#23282b"></div>
<div style="left:1057px;top:1652px;width:2986px;height:3px;background:#23282b"></div>
<div style="left:1057px;top:1655px;width:2986px;height:5.2px;background:#c9c9c9"></div>
<div style="left:1057px;top:1660px;width:2986px;height:2.6px;background:#161616"></div>
<div style="left:1692.0px;top:1608px;width:7px;height:47px;background:#23282b"></div>
<div style="left:1693.5px;top:1606px;width:3.8px;height:52px;background:#e2e2e2"></div>
<div style="left:1884.0px;top:1608px;width:7px;height:47px;background:#23282b"></div>
<div style="left:1885.5px;top:1606px;width:3.8px;height:52px;background:#e2e2e2"></div>
<div style="left:2140.0px;top:1608px;width:7px;height:47px;background:#23282b"></div>
<div style="left:2141.5px;top:1606px;width:3.8px;height:52px;background:#e2e2e2"></div>
<div style="left:2331.5px;top:1608px;width:7px;height:47px;background:#23282b"></div>
<div style="left:2333px;top:1606px;width:3.8px;height:52px;background:#e2e2e2"></div>
<div style="left:2523.5px;top:1608px;width:7px;height:47px;background:#23282b"></div>
<div style="left:2525px;top:1606px;width:3.8px;height:52px;background:#e2e2e2"></div>
<span class="t" style="left:1068px;top:1616.0px;height:34px;line-height:34px;font-size:26px;letter-spacing:-0.10px;color:#cccccc;">Description</span>
<span class="t" style="left:1707px;top:1616.0px;height:34px;line-height:34px;font-size:26px;letter-spacing:-1.18px;color:#cccccc;">Resource</span>
<span class="t" style="left:1900px;top:1616.0px;height:34px;line-height:34px;font-size:26px;letter-spacing:-0.83px;color:#cccccc;">Path</span>
<span class="t" style="left:2155px;top:1616.0px;height:34px;line-height:34px;font-size:26px;letter-spacing:-0.04px;color:#cccccc;">Location</span>
<span class="t" style="left:2347px;top:1616.0px;height:34px;line-height:34px;font-size:26px;letter-spacing:-0.79px;color:#cccccc;">Type</span>
<svg style="left:1368px;top:1608.5px;" width="20" height="12" viewBox="0 0 20 12"><path d="M1.5 10.5 L10 2.5 L18.5 10.5" fill="none" stroke="#bdbdbd" stroke-width="2.4"/></svg>
<div style="left:1057px;top:1662.5px;width:640px;height:439.5px;background:#363636"></div>
<span class="t" style="left:3408px;top:1957.2px;height:56px;line-height:56px;font-size:43px;letter-spacing:-0.29px;color:#808080;-webkit-text-stroke:0">Activate Windows</span>
<span class="t" style="left:3408px;top:2014.5px;height:40px;line-height:40px;font-size:31px;letter-spacing:0.40px;color:#828282;-webkit-text-stroke:0">Go to Settings to activate Windows.</span>
<div style="left:4043px;top:134px;width:43px;height:1968px;background:#50565a"></div>
<div style="left:4051px;top:136px;width:4px;height:4px;background:#d9d2c4"></div>
<div style="left:4059px;top:136px;width:4px;height:4px;background:#d9d2c4"></div>
<div style="left:4067px;top:136px;width:4px;height:4px;background:#d9d2c4"></div>
<div style="left:4075px;top:136px;width:4px;height:4px;background:#d9d2c4"></div>
<svg style="left:4057px;top:157px;" width="20" height="19" viewBox="0 0 20 19"><rect x="6" y="1" width="13" height="10" fill="none" stroke="#9a8f84" stroke-width="1.8"/><path d="M6 4.5 H19" stroke="#9a8f84" stroke-width="1.6"/><rect x="1" y="7" width="13" height="10" fill="#50565a" stroke="#9a8f84" stroke-width="1.8"/><path d="M1 10.5 H14" stroke="#9a8f84" stroke-width="1.6"/></svg>
<svg style="left:4051px;top:202px;" width="33" height="20" viewBox="0 0 33 20"><rect x="5" y="0" width="28" height="14" fill="#d4d4d4"/><rect x="0" y="4" width="28" height="16" fill="#f2f2f2"/><rect x="4" y="9" width="18" height="5" fill="#8cc63f"/></svg>
<div style="left:0px;top:2102px;width:4086px;height:43px;background:#50565a"></div>
<div style="left:3484px;top:2117.0px;width:5px;height:4.6px;background:#e4ddd0"></div>
<div style="left:3484px;top:2125.7px;width:5px;height:4.6px;background:#e4ddd0"></div>
<div style="left:3484px;top:2134.4px;width:5px;height:4.6px;background:#e4ddd0"></div>
<div style="left:3484px;top:2143.1px;width:5px;height:4.6px;background:#e4ddd0"></div>
<div style="left:253px;top:367px;width:574px;height:529px;background:#f9f9f9;border:3.6px solid #ffffff;border-radius:9px;box-shadow:0 1px 5px 1px rgba(0,0,0,.55)"></div>
<div style="left:816px;top:366.6px;width:311px;height:106px;background:#f9f9f9;border:3.6px solid #ffffff;border-radius:9px;box-shadow:0 1px 5px 1px rgba(0,0,0,.55)"></div>
<div style="left:266.5px;top:375px;width:553px;height:45px;background:#efefef;border-radius:5px"></div>
<span class="t" style="left:335px;top:378.9px;height:34px;line-height:34px;font-size:26px;letter-spacing:-0.51px;color:#1a1a1a;">New</span>
<span class="t" style="left:335px;top:425.8px;height:34px;line-height:34px;font-size:26px;letter-spacing:-0.87px;color:#a9a9a9;">Open</span>
<span class="t" style="left:745.5px;top:426.8px;height:32px;line-height:32px;font-size:24.5px;letter-spacing:-2.09px;color:#b4b1b1;">F3</span>
<span class="t" style="left:335px;top:472.7px;height:34px;line-height:34px;font-size:26px;letter-spacing:-1.25px;color:#a9a9a9;">Rename</span>
<span class="t" style="left:745.5px;top:473.7px;height:32px;line-height:32px;font-size:24.5px;letter-spacing:-2.09px;color:#b4b1b1;">F2</span>
<span class="t" style="left:335px;top:519.6px;height:34px;line-height:34px;font-size:26px;letter-spacing:-0.90px;color:#a9a9a9;">Copy</span>
<span class="t" style="left:698px;top:519.6px;height:34px;line-height:34px;font-size:26px;letter-spacing:-0.08px;color:#b4b1b1;">Ctrl+C</span>
<span class="t" style="left:335px;top:566.5px;height:34px;line-height:34px;font-size:26px;letter-spacing:-0.82px;color:#1a1a1a;">Copy ID</span>
<span class="t" style="left:335px;top:613.4px;height:34px;line-height:34px;font-size:26px;letter-spacing:-0.23px;color:#a9a9a9;">Cut</span>
<span class="t" style="left:700px;top:613.4px;height:34px;line-height:34px;font-size:26px;letter-spacing:-0.19px;color:#b4b1b1;">Ctrl+X</span>
<span class="t" style="left:335px;top:660.3px;height:34px;line-height:34px;font-size:26px;letter-spacing:-1.62px;color:#a9a9a9;">Paste</span>
<span class="t" style="left:700px;top:660.3px;height:34px;line-height:34px;font-size:26px;letter-spacing:-0.19px;color:#b4b1b1;">Ctrl+V</span>
<span class="t" style="left:335px;top:707.2px;height:34px;line-height:34px;font-size:26px;letter-spacing:-1.03px;color:#a9a9a9;">Delete</span>
<span class="t" style="left:702px;top:707.2px;height:34px;line-height:34px;font-size:26px;letter-spacing:-1.03px;color:#b4b1b1;">Delete</span>
<span class="t" style="left:335px;top:754.1px;height:34px;line-height:34px;font-size:26px;letter-spacing:-1.51px;color:#1a1a1a;">Refresh</span>
<span class="t" style="left:745.5px;top:755.1px;height:32px;line-height:32px;font-size:24.5px;letter-spacing:-2.09px;color:#1a1a1a;">F5</span>
<span class="t" style="left:335px;top:801.0px;height:34px;line-height:34px;font-size:26px;letter-spacing:-1.09px;color:#1a1a1a;">Show References</span>
<span class="t" style="left:700px;top:801.0px;height:34px;line-height:34px;font-size:26px;letter-spacing:-0.48px;color:#1a1a1a;">Ctrl+R</span>
<span class="t" style="left:335px;top:847.9px;height:34px;line-height:34px;font-size:26px;letter-spacing:0.02px;color:#1a1a1a;">Open containing folder</span>
<svg style="left:780px;top:387px;" width="14" height="20" viewBox="0 0 14 20"><path d="M2 1.5 L11 10 L2 18.5" fill="none" stroke="#222" stroke-width="2.4"/></svg>
<span class="t" style="left:895px;top:378.9px;height:34px;line-height:34px;font-size:26px;letter-spacing:-0.54px;color:#1a1a1a;">Folder</span>
<div style="left:816px;top:417.8px;width:321px;height:54px;background:linear-gradient(#aab0b0 0%,#a7a9a9 8%,#cfd1d1 26%,#e7e8e8 42%,#ececec 80%,#eaffff 92%,#eaffff 100%);border-style:solid;border-color:#fb3f42;border-width:8.6px 10px 8.8px 9px;box-shadow:0 3px 2px rgba(0,0,0,.7)"></div>
<div style="left:1123.5px;top:426.4px;width:3.5px;height:36.6px;background:#c4e8e8;opacity:.8"></div>
<span class="t" style="left:895px;top:425.9px;height:34px;line-height:34px;font-size:26px;letter-spacing:-1.45px;color:#1a1a1a;">Test Case</span>
</div></body></html>
